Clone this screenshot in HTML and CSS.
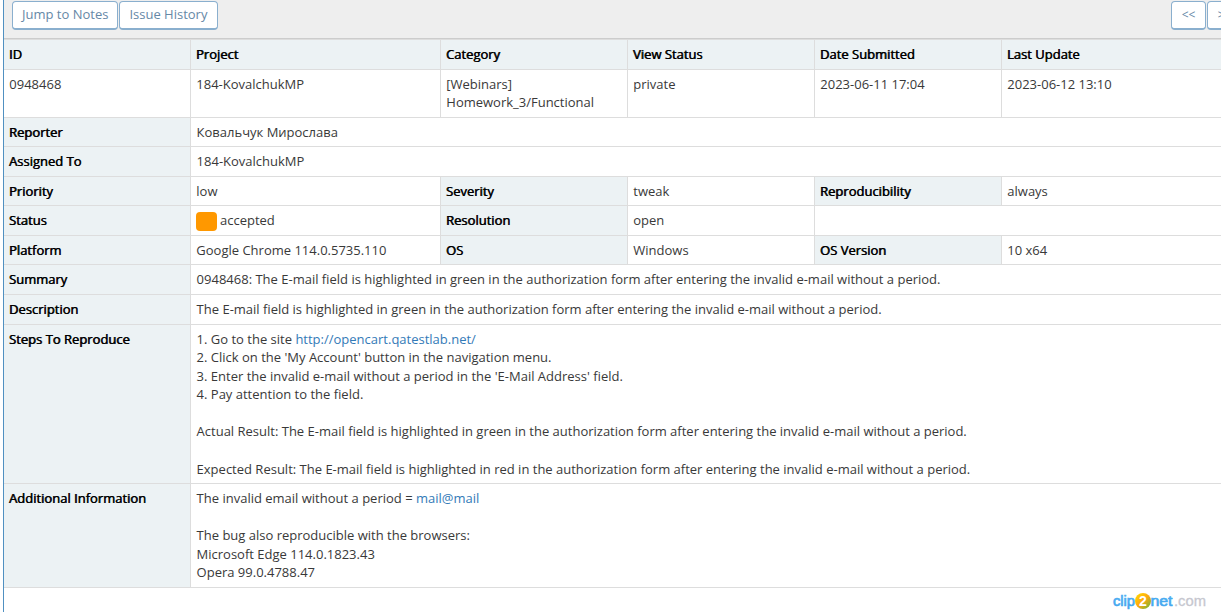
FILE: index.html
```html
<!DOCTYPE html>
<html lang="en">
<head>
<meta charset="utf-8">
<title>0948468: Issue details</title>
<link rel="stylesheet" href="styles.css">
</head>
<body>
<main class="widget">
  <div class="toolbar">
    <div class="group"><a class="btn">Jump to Notes</a><a class="btn history">Issue History</a></div>
    <div class="group nav"><a class="btn small">&lt;&lt;</a><a class="btn small">&gt;&gt;</a></div>
  </div>
  <div class="issue">
    <div class="label">ID</div><div class="label">Project</div><div class="label">Category</div><div class="label">View Status</div><div class="label">Date Submitted</div><div class="label last">Last Update</div>
    <div class="cell">0948468</div><div class="cell">184-KovalchukMP</div><div class="cell raised">[Webinars] Homework_3/Functional</div><div class="cell">private</div><div class="cell">2023-06-11 17:04</div><div class="cell last">2023-06-12 13:10</div>
    <div class="label">Reporter</div><div class="cell wide">Ковальчук Мирослава</div>
    <div class="label">Assigned To</div><div class="cell wide">184-KovalchukMP</div>
    <div class="label">Priority</div><div class="cell">low</div><div class="label">Severity</div><div class="cell">tweak</div><div class="label">Reproducibility</div><div class="cell last">always</div>
    <div class="label">Status</div><div class="cell status"><i class="swatch"></i><span>accepted</span></div><div class="label">Resolution</div><div class="cell">open</div><div class="cell pair"></div>
    <div class="label">Platform</div><div class="cell">Google Chrome 114.0.5735.110</div><div class="label">OS</div><div class="cell">Windows</div><div class="label">OS Version</div><div class="cell last">10 x64</div>
    <div class="label">Summary</div><div class="cell wide">0948468: The E-mail field is highlighted in green in the authorization form after entering the invalid e-mail without a period.</div>
    <div class="label">Description</div><div class="cell wide">The E-mail field is highlighted in green in the authorization form after entering the invalid e-mail without a period.</div>
    <div class="label">Steps To Reproduce</div><div class="cell wide raised">1. Go to the site <a class="link">http://opencart.qatestlab.net/</a><br>2. Click on the 'My Account' button in the navigation menu.<br>3. Enter the invalid e-mail without a period in the 'E-Mail Address' field.<br>4. Pay attention to the field.<br><br>Actual Result: The E-mail field is highlighted in green in the authorization form after entering the invalid e-mail without a period.<br><br>Expected Result: The E-mail field is highlighted in red in the authorization form after entering the invalid e-mail without a period.</div>
    <div class="label">Additional Information</div><div class="cell wide">The invalid email without a period = <a class="link">mail@mail</a><br><br>The bug also reproducible with the browsers:<br>Microsoft Edge 114.0.1823.43<br>Opera 99.0.4788.47</div>
  </div>
  <div class="watermark">
    <svg width="96" height="22" viewBox="0 0 96 22" role="img" aria-label="clip2net.com">
      <defs>
        <linearGradient id="ball" x1="0" y1="0" x2="1" y2="1"><stop offset="0" stop-color="#ffe000"/><stop offset=".5" stop-color="#ffa70f"/><stop offset="1" stop-color="#5fb83a"/></linearGradient>
        <linearGradient id="blue" x1="0" y1="0" x2="0" y2="1"><stop offset="0" stop-color="#62c2ff"/><stop offset="1" stop-color="#3298e6"/></linearGradient>
      </defs>
      <text class="brand" x="1" y="15" textLength="22" lengthAdjust="spacingAndGlyphs">clip</text>
      <text class="brand" x="38.5" y="15" textLength="22" lengthAdjust="spacingAndGlyphs">net</text>
      <circle cx="31" cy="10" r="8" fill="url(#ball)"/>
      <text class="two" x="27" y="15">2</text>
      <text class="domain" x="62" y="15" textLength="32" lengthAdjust="spacingAndGlyphs">.com</text>
    </svg>
  </div>
</main>
</body>
</html>
```
FILE: styles.css
```css
* { box-sizing: border-box; }
body {
  margin: 0;
  height: 612px;
  overflow: hidden;
  background: #fff;
  color: #393939;
  font: 13px/18.57px "Open Sans", sans-serif;
}
.widget {
  height: 612px;
  margin-left: 3px;
  border-left: 1px solid #5090c1;
  display: flex;
  flex-direction: column;
  overflow: hidden;
}
.toolbar {
  flex: none;
  display: flex;
  justify-content: space-between;
  height: 40px;
  padding: 1px 0 0 8px;
  background: #eee;
  border-bottom: 1px solid #ddd;
  box-shadow: inset 0 -1px #ccc;
}
.group { display: flex; gap: 1px; }
.nav { width: 50px; }
.btn {
  flex: none;
  height: 29px;
  padding: 3px 9px 0;
  border: 1px solid #8aafce;
  border-bottom-width: 2px;
  border-radius: 4px;
  background: #fff;
  color: #6688a6;
  white-space: nowrap;
}
.history { width: 99px; }
.small { width: 35px; padding: 4px 0 0; text-align: center; font-size: 12px; }
.issue {
  flex: none;
  display: grid;
  grid-template-columns: 187px 250px 187px 187px 187px 219px;
  grid-template-rows: 30px 48px 29px 30px 29px 30px 29px 30px 30px 159px 104px;
}
.label, .cell {
  padding: 5px 5px 0;
  border-right: 1px solid #ddd;
  border-bottom: 1px solid #ddd;
}
.cell { padding-left: 5.3px; }
.label { padding-left: 4.8px; background: #ecf2f4; color: #000; text-shadow: .6px 0 #000; }
.wide { grid-column: 2 / -1; padding-left: 5.6px; border-right: 0; }
.raised { padding-top: 4.58px; }
.pair { grid-column: 5 / -1; border-right: 0; }
.last { border-right: 0; }
.status { display: flex; gap: 3px; padding-left: 5px; }
.swatch { width: 21px; height: 19px; margin-top: 1px; border-radius: 4px; background: #ff9800; }
.link { color: #337ab7; }
.watermark { align-self: flex-end; display: flex; width: 109px; height: 22px; margin-top: 3px; }
.brand { font: 15.5px "Liberation Sans", sans-serif; fill: url(#blue); stroke: #48aaf0; stroke-width: .7px; }
.two { font: bold 14px "Liberation Sans", sans-serif; fill: #fff; }
.domain { font: 15px "Liberation Sans", sans-serif; fill: #c6c7cf; stroke: #c6c7cf; stroke-width: .3px; }
```
